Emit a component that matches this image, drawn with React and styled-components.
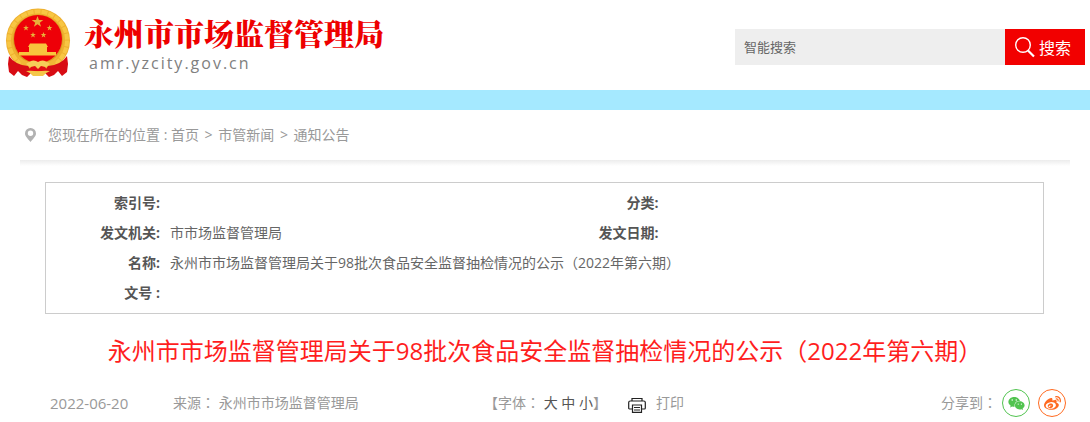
import React from "react";
import styled, { createGlobalStyle } from "styled-components";
import { FaWeixin, FaWeibo } from "react-icons/fa";

const GlobalStyle = createGlobalStyle`
  * { box-sizing: border-box; }
  body {
    margin: 0;
    background: #fff;
    color: #666;
    font: 14px/30px "Open Sans", "Noto Sans CJK SC", sans-serif;
  }
  button, input { font-family: inherit; }
  a { color: inherit; text-decoration: none; }
`;

const Header = styled.header`
  display: flex;
  justify-content: space-between;
  height: 90px;
  padding: 0 5px;
`;

const Brand = styled.a`
  display: flex;
  gap: 13px;
  padding-top: 8px;
`;

const BrandText = styled.div`
  display: flex;
  flex-direction: column;
  padding-top: 5px;
`;

const SiteName = styled.span`
  color: #ee0000;
  font-family: "Noto Serif CJK SC", "Noto Sans CJK SC", serif;
  font-size: 30px;
  font-weight: 900;
  line-height: 38px;
`;

const SiteUrl = styled.span`
  padding-left: 5px;
  color: #808080;
  font-size: 16px;
  line-height: 24px;
  letter-spacing: 2px;
`;

const Search = styled.form`
  display: flex;
  height: 36px;
  margin-top: 29px;
`;

const SearchInput = styled.input`
  width: 270px;
  padding: 0 9px;
  border: 0;
  background: #eee;
  color: #666;
  font-size: 13px;
  &::placeholder { color: #666; opacity: 1; }
`;

const SearchButton = styled.button`
  display: flex;
  align-items: center;
  gap: 4px;
  width: 80px;
  padding: 0 0 0 10px;
  border: 0;
  background: #f20000;
  color: #fff;
  font-size: 16px;
  cursor: pointer;
`;

const Band = styled.div`
  height: 20px;
  background: #a5e9ff;
`;

const Breadcrumb = styled.nav`
  display: flex;
  align-items: center;
  gap: 12px;
  height: 50px;
  margin: 0 20px;
  padding-left: 5px;
  color: #999;
`;

const Separator = styled.span`
  margin: 0 2px;
`;

const Shade = styled.div`
  height: 6px;
  margin: 0 20px 16px;
  background: linear-gradient(#ececec, #fff);
`;

const InfoBox = styled.section`
  margin: 0 46px 0 45px;
  padding: 5px 0;
  border: 1px solid #ccc;
`;

const InfoTable = styled.table`
  width: 100%;
  table-layout: fixed;
  border-collapse: collapse;
`;

const LabelCol = styled.col`
  width: 114px;
`;

const Label = styled.th`
  height: 30px;
  padding: 0;
  color: #555;
  text-align: right;
  white-space: nowrap;
`;

const Value = styled.td`
  height: 30px;
  padding: 0 0 0 10px;
`;

const Title = styled.h1`
  margin: 19px 20px 20px;
  color: #ff1e1e;
  font-size: 24px;
  font-weight: 400;
  line-height: 35px;
  text-align: center;
`;

const Meta = styled.div`
  display: flex;
  align-items: center;
  padding: 0 24px 0 50px;
  color: #999;
  white-space: nowrap;
`;

const DateText = styled.time`
  width: 123px;
  font-size: 15px;
`;

const Source = styled.span`
  width: 311px;
`;

const TextButton = styled.button`
  display: inline-flex;
  align-items: center;
  gap: 10px;
  padding: 0;
  border: 0;
  background: none;
  color: ${(p) => (p.$dark ? "#555" : "#999")};
  font-size: 14px;
  line-height: 30px;
  cursor: pointer;
`;

const FontSizes = styled.span`
  margin-right: 21px;
`;

const Share = styled.div`
  display: flex;
  align-items: center;
  gap: 8px;
  margin-left: auto;
`;

const ShareLabel = styled.span`
  margin-right: -3px;
`;

const ShareLink = styled.a`
  display: flex;
  align-items: center;
  justify-content: center;
  width: 28px;
  height: 28px;
  border: 1px solid ${(p) => p.$color};
  border-radius: 50%;
  color: ${(p) => p.$color};
`;

/* Full-width punctuation centred in its em box */
const Punct = styled.span`
  font-family: "Noto Sans CJK TC", sans-serif;
  line-height: 1;
`;

const STAR = "M0-5 1.2-1.6 4.8-1.6 1.9.6 3 4 0 1.9-3 4-1.9.6-4.8-1.6-1.2-1.6Z";

const Emblem = () => (
  <svg width="66" height="70" viewBox="0 0 66 70" aria-hidden="true">
    <circle cx="33" cy="32.500" r="32" fill="#eeb02f" />
    <circle cx="33" cy="32.500" r="29" fill="none" stroke="#f8c643" strokeWidth="4" strokeDasharray="6 1" />
    <circle cx="33" cy="31.500" r="25" fill="#dc9a22" />
    <circle cx="33" cy="31" r="24" fill="#ee0008" />
    <g fill="#e8b03a">
      <path d={STAR} transform="translate(32.500 14) scale(1.200)" />
      <path d={STAR} transform="translate(21 20) scale(.6)" />
      <path d={STAR} transform="translate(44.500 20) scale(.6)" />
      <path d={STAR} transform="translate(28 27) scale(.6)" />
      <path d={STAR} transform="translate(38.500 27) scale(.6)" />
    </g>
    <path d="M25 35.500h16l2 3.500H23ZM24 39h18v5h9v3.500H14V44h10Z" fill="#f8c53c" />
    <path d="M14 49q8 6 19 6t19-6l-2 7-10 7H26l-10-7Z" fill="#f1b636" />
    <path d="M4 48q6 9 19 10l4 6-5 5-5-2-4-4-4 5-5-4-1-8ZM62 48q-6 9-19 10l-4 6 5 5 5-2 4-4 4 5 5-4 1-8Z" fill="#d80c14" />
    <path d="M21 56q6-5 10-3l2 1 2-1q4-2 10 3l-4 3-5-1-3 3-3-3-5 1Z" fill="#f6cd58" />
    <path d="M26 59l4-1 3 3 3-3 4 1 3 4H23Z" fill="#e20d14" />
    <path d="M21 63q7-1 12 1 5-2 12-1-5 2-7 5H28q-2-3-7-5Z" fill="#f4c74a" />
  </svg>
);

const SearchIcon = () => (
  <svg width="20" height="21" viewBox="0 0 20 21" fill="none" stroke="#fff" aria-hidden="true">
    <circle cx="8" cy="8" r="7.300" strokeWidth="1.400" />
    <path d="m13 13.500 6 6" strokeWidth="2.200" />
  </svg>
);

const PinIcon = () => (
  <svg width="11" height="14" viewBox="0 0 11 14" aria-hidden="true">
    <path fill="#b2b2b2" fillRule="evenodd" d="M5.500 0A5.400 5.400 0 0 0 0 5.400C0 8.500 3.500 11 5.500 14 7.500 11 11 8.500 11 5.400A5.400 5.400 0 0 0 5.500 0Zm0 2.600a2.700 2.700 0 1 1 0 5.400 2.700 2.700 0 0 1 0-5.400Z" />
  </svg>
);

const PrintIcon = () => (
  <svg width="18" height="20" viewBox="0 0 18 20" fill="none" stroke="#222" strokeWidth="1.200" aria-hidden="true">
    <path d="M4 8V5.500h10V8M4 16H1.500Q.7 16 .7 15v-5.500Q.7 8 2.200 8h13.600q1.500 0 1.500 1.500V15q0 1-.8 1H14" />
    <path d="M4.500 12h9v7.400h-9ZM6 14.500h6M6 17h6" />
  </svg>
);

export default function App() {
  return (
    <>
      <GlobalStyle />
      <Header>
        <Brand href="#">
          <Emblem />
          <BrandText>
            <SiteName>永州市市场监督管理局</SiteName>
            <SiteUrl>amr.yzcity.gov.cn</SiteUrl>
          </BrandText>
        </Brand>
        <Search onSubmit={(e) => e.preventDefault()}>
          <SearchInput aria-label="智能搜索" placeholder="智能搜索" />
          <SearchButton type="submit"><SearchIcon />搜索</SearchButton>
        </Search>
      </Header>
      <Band />
      <Breadcrumb>
        <PinIcon />
        <span>
          您现在所在的位置 : <a href="#">首页</a> <Separator>&gt;</Separator> <a href="#">市管新闻</a>{" "}
          <Separator>&gt;</Separator> <a href="#">通知公告</a>
        </span>
      </Breadcrumb>
      <Shade />
      <main>
        <InfoBox>
          <InfoTable>
            <colgroup><LabelCol /><col /><LabelCol /><col /></colgroup>
            <tbody>
              <tr>
                <Label scope="row">索引号:</Label><Value />
                <Label scope="row">分类:</Label><Value />
              </tr>
              <tr>
                <Label scope="row">发文机关:</Label><Value>市市场监督管理局</Value>
                <Label scope="row">发文日期:</Label><Value />
              </tr>
              <tr>
                <Label scope="row">名称:</Label>
                <Value colSpan={3}>
                  永州市市场监督管理局关于98批次食品安全监督抽检情况的公示<Punct>（</Punct>2022年第六期<Punct>）</Punct>
                </Value>
              </tr>
              <tr>
                <Label scope="row">文号 :</Label><Value colSpan={3} />
              </tr>
            </tbody>
          </InfoTable>
        </InfoBox>
        <Title>
          永州市市场监督管理局关于98批次食品安全监督抽检情况的公示<Punct>（</Punct>2022年第六期<Punct>）</Punct>
        </Title>
        <Meta>
          <DateText dateTime="2022-06-20">2022-06-20</DateText>
          <Source>来源<Punct>：</Punct> 永州市市场监督管理局</Source>
          <FontSizes>
            【字体<Punct>：</Punct> <TextButton $dark>大</TextButton> <TextButton $dark>中</TextButton> <TextButton $dark>小</TextButton>】
          </FontSizes>
          <TextButton onClick={() => window.print()}><PrintIcon />打印</TextButton>
          <Share>
            <ShareLabel>分享到<Punct>：</Punct></ShareLabel>
            <ShareLink href="#" aria-label="微信" $color="#51c34f"><FaWeixin size={17} /></ShareLink>
            <ShareLink href="#" aria-label="微博" $color="#ff6a20"><FaWeibo size={17} /></ShareLink>
          </Share>
        </Meta>
      </main>
    </>
  );
}
